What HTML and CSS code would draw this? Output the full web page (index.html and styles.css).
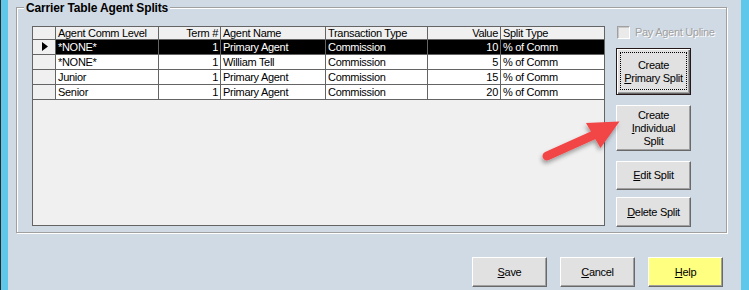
FILE: index.html
```html
<!DOCTYPE html>
<html>
<head>
<meta charset="utf-8">
<link rel="stylesheet" href="styles.css">
</head>
<body>
<div class="edge-left"></div>
<div class="main">
  <div class="group">
    <span class="group-title">Carrier Table Agent Splits</span>
    <div class="grid">
      <div class="row head">
        <div class="cell c0"></div>
        <div class="cell c1">Agent Comm Level</div>
        <div class="cell c2 num">Term #</div>
        <div class="cell c3">Agent Name</div>
        <div class="cell c4">Transaction Type</div>
        <div class="cell c5 num">Value</div>
        <div class="cell c6">Split Type</div>
      </div>
      <div class="row data selected">
        <div class="cell c0"><svg class="indicator" width="6" height="9" viewBox="0 0 6 9"><polygon points="0,0 6,4.5 0,9" fill="#000"/></svg></div>
        <div class="cell c1">*NONE*</div>
        <div class="cell c2 num">1</div>
        <div class="cell c3">Primary Agent</div>
        <div class="cell c4">Commission</div>
        <div class="cell c5 num">10</div>
        <div class="cell c6">% of Comm</div>
      </div>
      <div class="row data">
        <div class="cell c0"></div>
        <div class="cell c1">*NONE*</div>
        <div class="cell c2 num">1</div>
        <div class="cell c3">William Tell</div>
        <div class="cell c4">Commission</div>
        <div class="cell c5 num">5</div>
        <div class="cell c6">% of Comm</div>
      </div>
      <div class="row data">
        <div class="cell c0"></div>
        <div class="cell c1">Junior</div>
        <div class="cell c2 num">1</div>
        <div class="cell c3">Primary Agent</div>
        <div class="cell c4">Commission</div>
        <div class="cell c5 num">15</div>
        <div class="cell c6">% of Comm</div>
      </div>
      <div class="row data">
        <div class="cell c0"></div>
        <div class="cell c1">Senior</div>
        <div class="cell c2 num">1</div>
        <div class="cell c3">Primary Agent</div>
        <div class="cell c4">Commission</div>
        <div class="cell c5 num">20</div>
        <div class="cell c6">% of Comm</div>
      </div>
    </div>
    <div class="side">
      <div class="check">
        <span class="check-box"></span>
        <span class="check-label">Pay Agent Upline</span>
      </div>
      <div class="btn default primary"><span>Create</span><span><u>P</u>rimary Split</span></div>
      <div class="btn individual"><span>Create</span><span><u>I</u>ndividual</span><span>Split</span></div>
      <div class="btn edit"><span><u>E</u>dit Split</span></div>
      <div class="btn delete"><span><u>D</u>elete Split</span></div>
    </div>
  </div>
  <div class="actions">
    <div class="btn action"><span><u>S</u>ave</span></div>
    <div class="btn action"><span><u>C</u>ancel</span></div>
    <div class="btn action help"><span><u>H</u>elp</span></div>
  </div>
</div>
<div class="edge-right"></div>
<svg class="arrow" width="749" height="290" viewBox="0 0 749 290">
  <defs>
    <filter id="shadow" x="-30%" y="-30%" width="160%" height="180%">
      <feDropShadow dx="-1" dy="3" stdDeviation="2" flood-color="#000" flood-opacity="0.35"/>
    </filter>
  </defs>
  <g filter="url(#shadow)">
    <line x1="547" y1="156" x2="596" y2="134" stroke="#f24444" stroke-width="9" stroke-linecap="round"/>
    <polygon points="586,123 619.5,121.5 600.5,148" fill="#f24444"/>
  </g>
</svg>
</body>
</html>
```
FILE: styles.css
```css
* { box-sizing: border-box; }
html, body { margin: 0; padding: 0; }
body {
  width: 749px;
  height: 290px;
  overflow: hidden;
  position: relative;
  display: flex;
  background: #d0dae4;
  font-family: "Liberation Sans", Arial, sans-serif;
  font-size: 11px;
  letter-spacing: -0.3px;
  color: #000;
}
.edge-left {
  flex: none;
  width: 8px;
  border-left: 1px solid #2b2b2b;
  background: #5ec7ea;
}
.edge-right {
  flex: none;
  width: 8px;
  background: #5ec7ea;
}
.main {
  flex: none;
  width: 733px;
  display: flex;
  flex-direction: column;
}
.group {
  position: relative;
  display: flex;
  align-items: flex-start;
  margin: 7px 0 0 8px;
  width: 711px;
  height: 226px;
  padding: 18px 0 0 15px;
  border: 1px solid #a0a0a0;
  box-shadow: 1px 1px 0 #fff, inset 1px 1px 0 #fff;
}
.group-title {
  position: absolute;
  left: 7px;
  top: -7px;
  padding: 0 2px;
  background: #d0dae4;
  font-size: 12px;
  font-weight: bold;
  line-height: 14px;
  letter-spacing: -0.15px;
  white-space: nowrap;
}
.grid {
  flex: none;
  width: 573px;
  height: 200px;
  border: 1px solid #646464;
  background: #f0f0f0;
}
.row {
  display: flex;
  height: 15px;
  border-bottom: 1px solid #646464;
}
.row.head { height: 13px; }
.cell {
  flex: none;
  height: 100%;
  padding: 0 2px;
  line-height: 14px;
  white-space: nowrap;
  overflow: hidden;
  border-right: 1px solid #646464;
}
.row.head .cell { line-height: 12px; }
.num { text-align: right; }
.c0 { width: 23px; padding: 0; }
.c1 { width: 103px; }
.c2 { width: 62px; }
.c3 { width: 105px; }
.c4 { width: 102px; }
.c5 { width: 73px; }
.c6 { flex: 1; border-right: none; }
.row.data .cell { background: #fff; }
.row.data .c0 { background: #f0f0f0; }
.row.selected .cell { background: #000; color: #fff; }
.row.selected .c0 { background: #f0f0f0; }
.indicator { display: block; margin: 2px 0 0 9px; }

.side {
  flex: none;
  width: 75px;
  margin-left: 11px;
  display: flex;
  flex-direction: column;
}
.check {
  display: flex;
  align-items: center;
  height: 13px;
  white-space: nowrap;
}
.check-box {
  flex: none;
  width: 13px;
  height: 13px;
  margin-left: 1px;
  border: 1px solid;
  border-color: #a0a0a0 #fff #fff #a0a0a0;
  box-shadow: inset 1px 1px 0 #c8c8c8;
  background: #eaeaea;
}
.check-label {
  margin-left: 5px;
  color: #a0a0a0;
  text-shadow: 1px 1px 0 #fff;
  line-height: 13px;
}
.btn {
  position: relative;
  display: flex;
  flex-direction: column;
  align-items: center;
  justify-content: center;
  background: #e1e1e1;
  border: 1px solid;
  border-color: #fff #696969 #696969 #fff;
  box-shadow: inset -1px -1px 0 #a0a0a0;
  line-height: 13px;
  text-align: center;
  white-space: nowrap;
}
.btn.default {
  border-color: #241818;
  box-shadow: inset 1px 1px 0 #fff, inset -1px -1px 0 #696969, inset -2px -2px 0 #a0a0a0;
}
.btn.default::after {
  content: "";
  position: absolute;
  left: 3px;
  top: 3px;
  right: 3px;
  bottom: 4px;
  border: 1px dotted #000;
}
.primary { height: 47px; margin-top: 9px; }
.individual { height: 46px; margin-top: 10px; }
.edit { height: 29px; margin-top: 10px; }
.delete { height: 30px; margin-top: 7px; }
.actions {
  display: flex;
  justify-content: flex-end;
  gap: 13px;
  margin: 24px 18px 0 0;
}
.action { width: 75px; height: 30px; }
.help { background: #ffff80; }
.arrow {
  position: absolute;
  left: 0;
  top: 0;
  pointer-events: none;
}
```
